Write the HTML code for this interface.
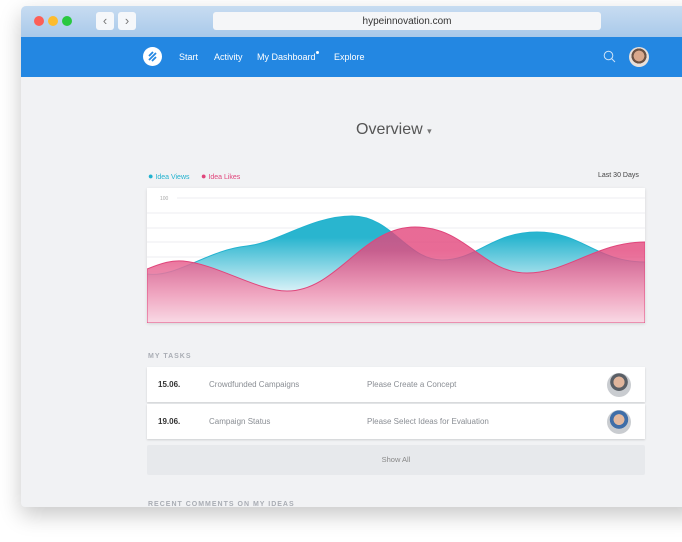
<!DOCTYPE html>
<html><head><meta charset="utf-8"><style>
*{box-sizing:border-box;margin:0;padding:0}
body{width:682px;height:542px;background:#fff;font-family:"Liberation Sans",sans-serif;position:relative;overflow:hidden}
.win{position:absolute;left:21px;top:6px;width:680px;height:501px;background:#f1f2f4;border-radius:5px 0 0 4px;overflow:hidden;box-shadow:0 8px 22px rgba(0,0,0,.22)}
.tb{position:absolute;left:0;top:0;right:0;height:31px;background:linear-gradient(#c7dcf1,#a9c9ea)}
.dot{position:absolute;top:10px;width:10px;height:10px;border-radius:50%}
.nb{position:absolute;top:6px;width:18px;height:18px;background:#f5f7fa;border-radius:3px;color:#777;font-size:13px;text-align:center;line-height:17px}
.url{position:absolute;left:192px;top:6px;width:388px;height:18px;background:#f5f6f8;border-radius:3px;font-size:10px;color:#333;text-align:center;line-height:19px}
.nav{position:absolute;left:0;top:31px;right:0;height:40px;background:#2387e2}
.nav span{position:absolute;top:15px;color:#fff;font-size:9px}
.title{position:absolute;left:335px;top:115px;font-size:16px;color:#555}
.leg{position:absolute;top:165px;font-size:7px}
.chart{position:absolute;left:126px;top:182px;width:498px;height:135px;background:#fff;box-shadow:0 1px 3px rgba(0,0,0,.12)}
.h{position:absolute;left:127px;font-size:7px;font-weight:bold;letter-spacing:1px;color:#a9adb4}
.row{position:absolute;left:126px;width:498px;height:35px;background:#fff;box-shadow:0 1px 2px rgba(0,0,0,.15);font-size:8px;color:#8a8e94}
.row span{position:absolute;top:13px}
.av{position:absolute;left:460px;top:6px;width:24px;height:24px;border-radius:50%;background:radial-gradient(circle at 50% 38%,#e0b59c 0 28%,#5a5f66 30% 45%,#c9ccd0 47%)}
</style></head><body>
<div class="win">
<div class="tb">
<div class="dot" style="left:13px;background:#fc5f57"></div>
<div class="dot" style="left:27px;background:#fdbc2e"></div>
<div class="dot" style="left:41px;background:#28c840"></div>
<div class="nb" style="left:75px">‹</div><div class="nb" style="left:97px">›</div>
<div class="url">hypeinnovation.com</div>
</div>
<div class="nav">
<div style="position:absolute;left:122px;top:10px;width:19px;height:19px;border-radius:50%;background:#fff"><svg width="19" height="19"><path d="M6 9L10 5M6 13L13 6M9 14L13 10" stroke="#2387e2" stroke-width="1.8"/></svg></div>
<span style="left:158px">Start</span><span style="left:193px">Activity</span><span style="left:236px">My Dashboard</span>
<div style="position:absolute;left:295px;top:14px;width:3px;height:3px;border-radius:50%;background:#fff"></div>
<span style="left:313px">Explore</span>
<svg style="position:absolute;left:582px;top:13px" width="13" height="13"><circle cx="5.5" cy="5.5" r="4.3" fill="none" stroke="#cfe3f7" stroke-width="1"/><path d="M8.6 8.6L12 12" stroke="#cfe3f7"/></svg>
<div style="position:absolute;left:608px;top:10px;width:20px;height:20px;border-radius:50%;background:radial-gradient(circle at 50% 45%,#d9a88c 0 35%,#6b5244 37% 50%,#e8e0da 52%)"></div>
</div>
<div class="title">Overview <span style="font-size:9px;color:#777">▾</span></div>
<div class="leg" style="left:127px;color:#22b2cf"><span style="font-size:9px">●</span> Idea Views</div>
<div class="leg" style="left:180px;color:#e0457b"><span style="font-size:9px">●</span> Idea Likes</div>
<div class="leg" style="left:577px;color:#444;top:166px">Last 30 Days</div>
<div class="chart">
<svg width="498" height="135">
<defs>
<linearGradient id="gv" x1="0" y1="0" x2="0" y2="1"><stop offset="0.2" stop-color="#29b5cf"/><stop offset="0.75" stop-color="#e9f7fb"/></linearGradient>
<linearGradient id="gl" x1="0" y1="0" x2="0" y2="1"><stop offset="0.25" stop-color="#e3467c" stop-opacity=".8"/><stop offset="1" stop-color="#f9dbe6"/></linearGradient>
</defs>
<g stroke="#eceef0" stroke-width="1"><path d="M30 10H498M0 25H498M0 40H498M0 54H498M0 69H498M0 84H498M0 99H498"/></g>
<text x="13" y="12" font-size="5" fill="#aaa" font-family="Liberation Sans">100</text>
<path d="M0,86 C30,90 60,62 100,58 C130,55 165,28 205,28 C245,28 260,72 295,72 C330,72 345,44 390,44 C435,44 450,74 498,74 L498,135 L0,135Z" fill="url(#gv)" stroke="#22b2cf"/>
<path d="M0,81 C15,75 25,72 36,73 C70,76 110,103 140,103 C190,103 215,39 268,39 C320,39 335,85 380,85 C420,85 450,54 498,54 L498,135 L0,135 Z" fill="url(#gl)" stroke="#e0457b"/>
</svg>
</div>
<div class="h" style="top:347px">MY TASKS</div>
<div class="row" style="top:361px"><span style="left:11px;color:#333;font-weight:bold">15.06.</span><span style="left:62px">Crowdfunded Campaigns</span><span style="left:220px">Please Create a Concept</span><div class="av"></div></div>
<div class="row" style="top:398px"><span style="left:11px;color:#333;font-weight:bold">19.06.</span><span style="left:62px">Campaign Status</span><span style="left:220px">Please Select Ideas for Evaluation</span><div class="av" style="background:radial-gradient(circle at 50% 40%,#e2b89e 0 28%,#3f6ea8 30% 48%,#c9ccd0 50%)"></div></div>
<div style="position:absolute;left:126px;top:439px;width:498px;height:30px;background:#e7e9ec;border-radius:2px;font-size:7.5px;color:#888;text-align:center;line-height:30px">Show All</div>
<div class="h" style="top:495px">RECENT COMMENTS ON MY IDEAS</div>
</div>
</body></html>
